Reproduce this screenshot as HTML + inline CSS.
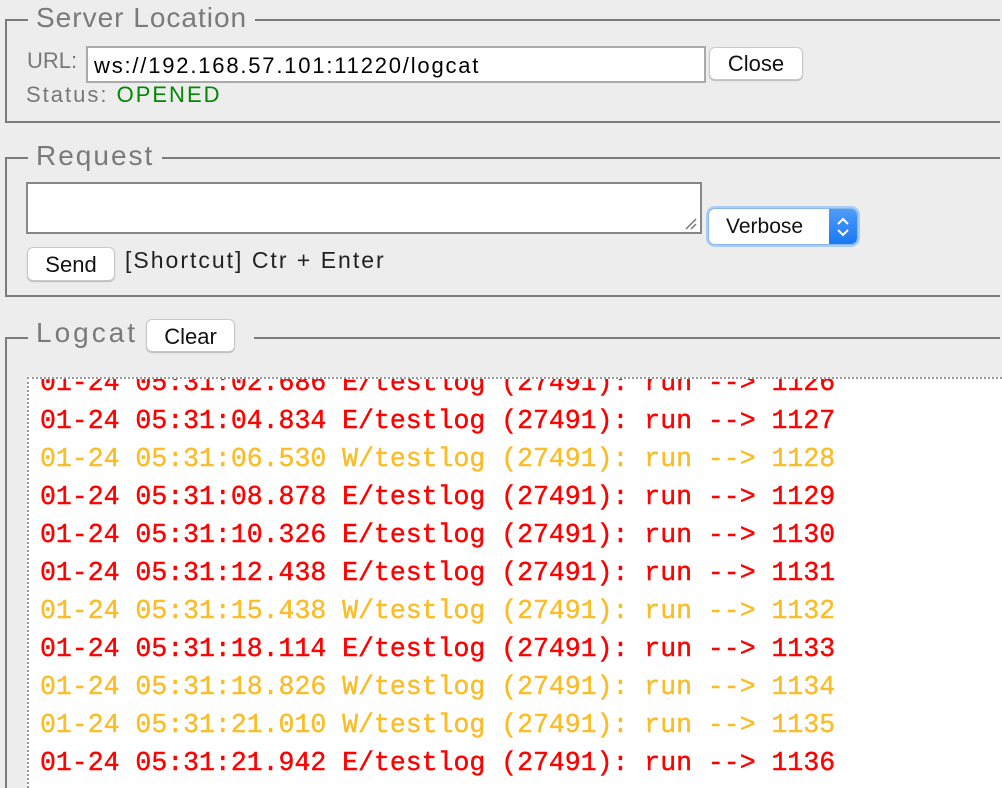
<!DOCTYPE html>
<html style="overflow:hidden;height:788px"><head><meta charset="utf-8"><style>
body{margin:0;width:1002px;height:788px;background:#ededed;overflow:hidden;position:relative;font-family:"Liberation Sans",sans-serif}
.fs{position:absolute;border:2px solid #7b7b7b;left:5px;width:993px}
.lg{position:absolute;background:#ededed;color:#7a7a7a;font-size:28px;padding:0 8px;line-height:30px;letter-spacing:1px}
.a{position:absolute}
.btn{position:absolute;background:#fff;border:1px solid #c8c8c8;border-radius:6px;font-size:22px;color:#111;text-align:center;box-shadow:0 1px 1px #bbb}
.log{position:absolute;left:27px;top:377px;width:973px;height:409px;background:#fff;border-top:2px dotted #999;border-left:2px dotted #999;overflow:hidden}
.r{position:absolute;left:11px;font-family:"Liberation Mono",monospace;font-size:26.5px;font-weight:normal;white-space:pre;line-height:38px;-webkit-text-stroke:0.4px currentColor}
.e{color:#f00}.w{color:#fbbd26}
</style></head><body>
<div class="fs" style="top:19px;height:100px;border-right:none"></div>
<div class="lg" style="left:28px;top:3px">Server Location</div>
<div class="a" style="left:27px;top:48px;font-size:22px;color:#777">URL:</div>
<div class="a" style="left:86px;top:46px;height:33px;background:#fff;border:2px solid #aaa;font-size:22px;line-height:35px;padding-left:6px;width:610px;letter-spacing:1.8px">ws://192.168.57.101:11220/logcat</div>
<div class="btn" style="left:709px;top:47px;width:92px;height:31px;line-height:31px">Close</div>
<div class="a" style="left:26px;top:82px;font-size:22px;color:#777;letter-spacing:2px">Status: <span style="color:#008800">OPENED</span></div>

<div class="fs" style="top:157px;height:136px;border-right:none"></div>
<div class="lg" style="left:28px;top:141px;letter-spacing:2px">Request</div>
<div class="a" style="left:26px;top:182px;width:672px;height:48px;background:#fff;border:2px solid #888"></div>
<svg class="a" style="left:684px;top:217px" width="14" height="14"><path d="M2 12L12 2M7 12L12 7" stroke="#777" stroke-width="1.5"/></svg>
<div class="a" style="left:708px;top:208px;width:148px;height:35px;border-radius:7px;background:#fff;border:1px solid #8ab8ee;box-shadow:0 0 0 2px #a9cdf5;overflow:hidden">
<div class="a" style="left:17px;top:6px;font-size:21px;color:#111">Verbose</div>
<div class="a" style="left:120px;top:0;width:28px;height:35px;background:linear-gradient(#4f9cf8,#1a79f3)"></div>
<svg class="a" style="left:126px;top:6px" width="16" height="24"><path d="M3 9L8 4L13 9M3 15L8 20L13 15" stroke="#fff" stroke-width="2" fill="none"/></svg>
</div>
<div class="btn" style="left:27px;top:247px;width:86px;height:32px;line-height:34px">Send</div>
<div class="a" style="left:125px;top:247px;font-size:23px;color:#222;letter-spacing:2px">[Shortcut] Ctr + Enter</div>

<div class="fs" style="top:337px;height:449px;border-right:none;border-bottom:none"></div>
<div class="lg" style="left:28px;top:318px;width:210px;height:34px"><span style="position:absolute;left:8px;top:0;letter-spacing:3px">Logcat</span></div>
<div class="btn" style="left:146px;top:319px;width:87px;height:31px;line-height:33px">Clear</div>
<div class="log">
<div class="r e" style="top:-15px">01-24 05:31:02.686 E/testlog (27491): run --> 1126</div>
<div class="r e" style="top:23px">01-24 05:31:04.834 E/testlog (27491): run --> 1127</div>
<div class="r w" style="top:61px">01-24 05:31:06.530 W/testlog (27491): run --> 1128</div>
<div class="r e" style="top:99px">01-24 05:31:08.878 E/testlog (27491): run --> 1129</div>
<div class="r e" style="top:137px">01-24 05:31:10.326 E/testlog (27491): run --> 1130</div>
<div class="r e" style="top:175px">01-24 05:31:12.438 E/testlog (27491): run --> 1131</div>
<div class="r w" style="top:213px">01-24 05:31:15.438 W/testlog (27491): run --> 1132</div>
<div class="r e" style="top:251px">01-24 05:31:18.114 E/testlog (27491): run --> 1133</div>
<div class="r w" style="top:289px">01-24 05:31:18.826 W/testlog (27491): run --> 1134</div>
<div class="r w" style="top:327px">01-24 05:31:21.010 W/testlog (27491): run --> 1135</div>
<div class="r e" style="top:365px">01-24 05:31:21.942 E/testlog (27491): run --> 1136</div>
</div>
</body></html>
